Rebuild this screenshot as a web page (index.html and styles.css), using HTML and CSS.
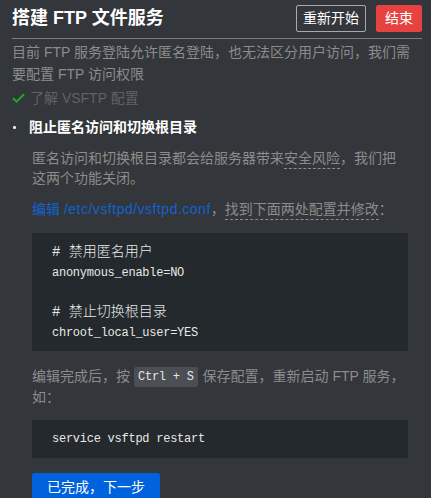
FILE: index.html
```html
<!DOCTYPE html>
<html lang="zh-CN">
<head>
<meta charset="utf-8">
<title>搭建 FTP 文件服务</title>
<link rel="stylesheet" href="styles.css">
</head>
<body>
<div class="panel">
  <header class="head">
    <h1 class="title">搭建 FTP 文件服务</h1>
    <div class="actions">
      <button class="btn btn-outline">重新开始</button>
      <button class="btn btn-danger">结束</button>
    </div>
  </header>
  <p class="intro">目前 FTP 服务登陆允许匿名登陆，也无法区分用户访问，我们需要配置 FTP 访问权限</p>
  <div class="done-step">
    <svg class="check" width="13" height="10" viewBox="0 0 13 10"><path d="M1 5.2 L4.6 8.6 L12 1.2" fill="none" stroke="#1aad19" stroke-width="2"/></svg>
    <span>了解 VSFTP 配置</span>
  </div>
  <ul class="steps">
    <li class="step">
      <h2 class="step-title">阻止匿名访问和切换根目录</h2>
      <div class="step-body">
        <p class="text">匿名访问和切换根目录都会给服务器带来<span class="dash">安全风险</span>，我们把这两个功能关闭。</p>
        <p class="text line-gap"><span class="link">编辑 <span class="path">/etc/vsftpd/vsftpd.conf</span></span>，<span class="dash">找到下面两处配置并修改</span>：</p>
        <pre class="code"><span class="cjk"># 禁用匿名用户</span>
anonymous_enable=NO

<span class="cjk"># 禁止切换根目录</span>
chroot_local_user=YES</pre>
        <p class="text after">编辑完成后，按<kbd class="kbd">Ctrl + S</kbd>保存配置，重新启动 FTP 服务，如：</p>
        <pre class="code code-short">service vsftpd restart</pre>
        <button class="btn btn-primary">已完成，下一步</button>
      </div>
    </li>
  </ul>
</div>
</body>
</html>
```

FILE: styles.css
```css
* { box-sizing: border-box; }
html, body {
  margin: 0;
  padding: 0;
  background: #33363b;
}
body {
  font-family: "Liberation Sans", "Noto Sans CJK SC", sans-serif;
  font-size: 14px;
  color: #8c8c8c;
  text-spacing-trim: space-all;
}
.panel {
  padding: 5px 9px 0 12px;
}
.head {
  display: flex;
  align-items: center;
  justify-content: space-between;
  height: 27px;
  padding-bottom: 6px;
  border-bottom: 1px solid #7b7b7e;
  box-sizing: content-box;
}
.title {
  margin: 0;
  font-size: 18px;
  font-weight: bold;
  color: #ffffff;
  line-height: 27px;
}
.actions {
  display: flex;
  gap: 10px;
}
.btn {
  font-family: "Liberation Sans", "Noto Sans CJK SC", sans-serif;
  font-size: 14px;
  height: 27px;
  line-height: 25px;
  border-radius: 2px;
  border: 1px solid transparent;
  color: #ffffff;
  cursor: pointer;
}
.btn-outline {
  background: transparent;
  border-color: #a9a9ab;
  padding: 0 6px;
}
.btn-danger {
  background: #e64340;
  border-color: #e64340;
  padding: 0 8px;
}
.intro {
  margin: 2px 0 0;
  line-height: 22px;
}
.done-step {
  display: flex;
  align-items: center;
  gap: 5px;
  margin-top: 2px;
  line-height: 22px;
  color: #606266;
}
.check { display: block; }
.steps {
  margin: 7px 0 0;
  padding: 0 0 0 17px;
  list-style: none;
}
.step { position: relative; }
.step::before {
  content: "";
  position: absolute;
  left: -16px;
  top: 10px;
  width: 3px;
  height: 3px;
  border-radius: 1px;
  background: #e6e6e6;
}
.step-title {
  margin: 0;
  font-size: 14px;
  font-weight: bold;
  color: #ffffff;
  line-height: 22px;
}
.step-body {
  margin: 0 14px 0 3px;
  padding-top: 10px;
}
.text {
  margin: 0;
  line-height: 20px;
}
.line-gap { margin-top: 11px; }
.dash {
  border-bottom: 1px dashed #8c8c8c;
  padding-bottom: 2px;
}
.link { color: #1063d1; }
.path { letter-spacing: 0.5px; }
.code {
  margin: 14px 0 0;
  background: #23292c;
  padding: 10px 20px 8px;
  font-family: "Liberation Mono", monospace;
  font-size: 12px;
  letter-spacing: -0.25px;
  line-height: 20px;
  color: #e8e8e8;
}
.cjk {
  font-family: "Liberation Mono", "Noto Sans CJK SC", monospace;
  font-size: 14px;
  letter-spacing: 0;
  line-height: 1;
  font-weight: 300;
}
.after {
  margin-top: 15px;
  line-height: 21px;
}
.kbd {
  display: inline-block;
  margin: 0 5px 0 4px;
  padding: 0 4px;
  height: 20px;
  line-height: 20px;
  background: #4b4e52;
  border-radius: 2px;
  font-family: "Liberation Mono", monospace;
  font-size: 12px;
  letter-spacing: -0.25px;
  color: #e6e6e6;
  vertical-align: 1px;
}
.code-short {
  margin-top: 12px;
  padding: 9px 20px 9px;
}
.btn-primary {
  display: block;
  margin-top: 15px;
  height: 28px;
  line-height: 26px;
  padding: 0 14px;
  background: #0062dc;
  border-color: #0062dc;
}
```
